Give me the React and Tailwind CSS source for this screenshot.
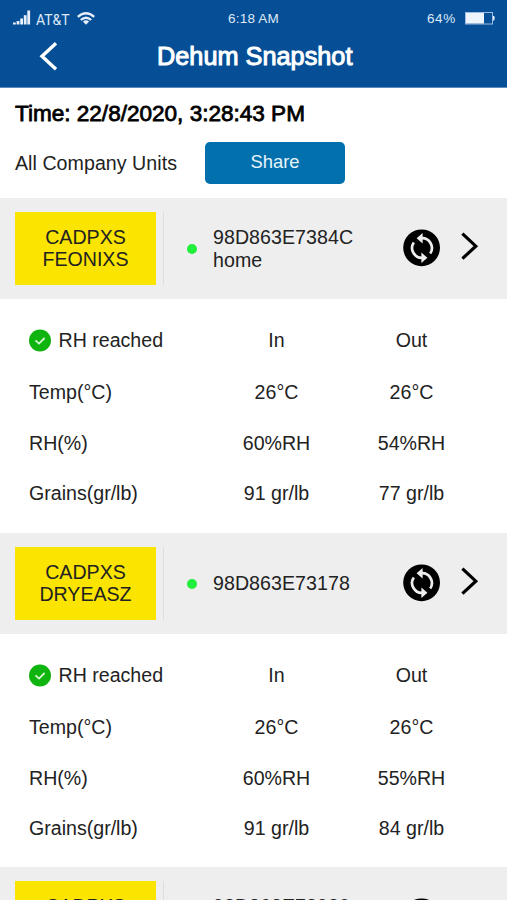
function SignalIcon() {
  return (
    <svg className="block h-[15px] w-[18px]" viewBox="0 0 18 15" fill="#e6effa">
      <rect x="0" y="12.5" width="2.8" height="2" />
      <rect x="3.6" y="11" width="2.8" height="3.5" />
      <rect x="7.2" y="8.5" width="2.8" height="6" />
      <rect x="10.8" y="5.2" width="2.8" height="9.3" />
      <rect x="14.3" y="0.5" width="2.8" height="14" />
    </svg>
  );
}

function WifiIcon() {
  return (
    <svg className="block h-[13px] w-[18px]" viewBox="0 0 18 13" fill="none" stroke="#e6effa" strokeWidth="2.3">
      <path d="M0.8 4.8Q9 -2.4 17.2 4.8" />
      <path d="M3.8 8Q9 3.4 14.2 8" />
      <path d="M5.9 9.6Q9 7 12.1 9.6L9 12.8Z" fill="#e6effa" stroke="none" />
    </svg>
  );
}

function BatteryIcon() {
  return (
    <svg className="block h-[13px] w-[31px]" viewBox="0 0 31 13">
      <rect x="0.5" y="0.5" width="27" height="11.5" fill="none" stroke="#9dbbe0" />
      <rect x="1" y="1" width="18" height="10.5" fill="#eef4fb" />
      <path d="M28 4h1.2q1.2 2.2 0 4.4H28z" fill="#e6effa" />
    </svg>
  );
}

function SyncIcon() {
  return (
    <svg className="mb-[2px] block h-[38px] w-[38px]" viewBox="0 0 38 38">
      <circle cx="18.6" cy="18.8" r="18.4" fill="#000" />
      <g fill="none" stroke="#eee" strokeWidth="2.7">
        <path d="M18 9.2A9.9 9.9 0 0 1 27.2 24.6" />
        <path d="M20 28.8A9.9 9.9 0 0 1 10.8 13.4" />
      </g>
      <path d="M19.6 4V14.4L13.6 9.2Z" fill="#eee" />
      <path d="M18.4 34V23.6L24.4 28.8Z" fill="#eee" />
    </svg>
  );
}

function CheckIcon() {
  return (
    <svg className="block h-[23px] w-[23px]" viewBox="0 0 23 23">
      <circle cx="11" cy="11.5" r="11" fill="#0fb40f" />
      <path d="M6.5 11.4L10 14.6L15.6 9" fill="none" stroke="#d5f7d2" strokeWidth="1.8" />
    </svg>
  );
}

function UnitHeader({ name, id, place }) {
  return (
    <div className="flex h-[101px] items-center bg-[#eeeeee] pl-[15px]">
      <div className="flex h-[73px] w-[141px] items-center justify-center bg-[#fbe400] text-center leading-[22px]">
        <span className="pb-px">
          CADPXS
          <br />
          {name}
        </span>
      </div>
      <div className="ml-[7px] h-[73px] w-px bg-[#dddddd]" />
      <div className="ml-[23px] size-[10px] rounded-full bg-[#22ee3c]" />
      <div className="ml-4 w-[190px] leading-[22.5px] tracking-[0.06px]">
        {id}
        {place && <div>{place}</div>}
      </div>
      <SyncIcon />
      <svg className="mb-[6px] ml-[19px] block h-[30px] w-[20px]" viewBox="0 0 20 30" fill="none" stroke="#000" strokeWidth="3.2">
        <path d="M2.4 2.6L15.8 15.2L2.4 27.6" />
      </svg>
    </div>
  );
}

function Row({ label, a, b }) {
  return (
    <div className="grid h-[50.7px] grid-cols-[180px_135px_135px] items-center">
      <div>{label}</div>
      <div className="text-center">{a}</div>
      <div className="text-center">{b}</div>
    </div>
  );
}

function Readings({ rh, grains }) {
  return (
    <div className="h-[234px] pl-[29px] pt-[16px]">
      <div className="mb-[1.6px]">
        <Row
          label={
            <div className="flex items-center gap-[6.5px]">
              <CheckIcon />
              RH reached
            </div>
          }
          a="In"
          b="Out"
        />
      </div>
      <Row label="Temp(°C)" a="26°C" b="26°C" />
      <Row label="RH(%)" a="60%RH" b={rh} />
      <Row label="Grains(gr/lb)" a="91 gr/lb" b={grains} />
    </div>
  );
}

export default function App() {
  return (
    <div className="h-[900px] w-[507px] overflow-hidden bg-white font-['Liberation_Sans',Arial,sans-serif] text-[19.6px] text-[#222222]">
      <header className="h-[88px] border-b border-[#5c8cc0] bg-[#064f96] text-white">
        <div className="grid h-[37px] grid-cols-3 items-center text-[13.5px] text-[#dfe9f6]">
          <div className="flex items-center pl-[13px]">
            <div className="mb-[2px]">
              <SignalIcon />
            </div>
            <span className="ml-[5px] mt-[2px] w-[36px] font-['Roboto',sans-serif] text-[14px] leading-4">AT&amp;T</span>
            <span className="ml-[5px]">
              <WifiIcon />
            </span>
          </div>
          <div className="pt-px text-center tracking-[0.2px]">6:18 AM</div>
          <div className="flex items-center justify-end gap-[9px] pr-[11px]">
            <span className="pt-px tracking-[0.7px]">64%</span>
            <BatteryIcon />
          </div>
        </div>
        <div className="-mt-px flex h-[39px] items-center">
          <svg className="ml-[39px] block h-[30px] w-[20px]" viewBox="0 0 20 30" fill="none" stroke="#fff" strokeWidth="3.4">
            <path d="M17 2.2L3 15.2L17 28.2" />
          </svg>
          <h1 className="ml-[98px] pt-[2px] text-[25.3px] [-webkit-text-stroke:1px_#fff]">Dehum Snapshot</h1>
        </div>
      </header>
      <section className="h-[110px] px-[15px] pt-[12px]">
        <h2 className="text-[22.55px] leading-7 text-black [-webkit-text-stroke:0.8px_#000]">Time: 22/8/2020, 3:28:43 PM</h2>
        <div className="mt-[14px] flex items-center">
          <span className="w-[190px] pt-px tracking-[0.05px]">All Company Units</span>
          <button className="h-[42px] w-[140px] rounded-[5px] bg-[#0270ad] pb-[2px] text-[18.4px] text-[#e8f4fc]">Share</button>
        </div>
      </section>
      <UnitHeader name="FEONIXS" id="98D863E7384C" place="home" />
      <Readings rh="54%RH" grains="77 gr/lb" />
      <UnitHeader name="DRYEASZ" id="98D863E73178" />
      <Readings rh="55%RH" grains="84 gr/lb" />
      <div className="-mt-px">
        <UnitHeader name="DRYEASZ" id="98D863E73980" place="home" />
      </div>
    </div>
  );
}
